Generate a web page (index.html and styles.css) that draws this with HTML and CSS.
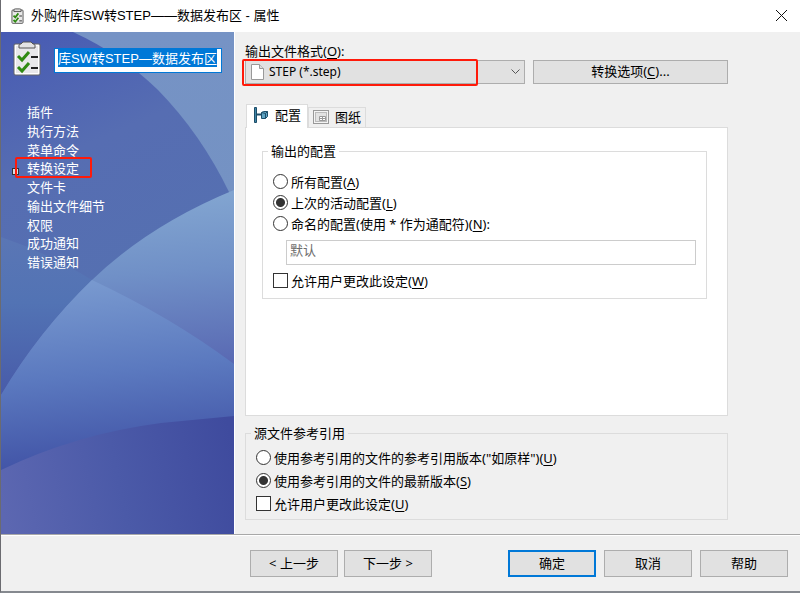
FILE: index.html
```html
<!DOCTYPE html>
<html lang="zh-CN">
<head>
  <meta charset="UTF-8">
  <title>外购件库SW转STEP——数据发布区 - 属性</title>
  <link rel="stylesheet" href="styles.css">
</head>
<body>

  <header class="titlebar">
    <svg class="title-icon" viewBox="0 0 28 36">
      <rect x="1.5" y="4.500" width="25" height="30" rx="2" fill="#e9e9e9" stroke="#4d4d4d" stroke-width="2"/>
      <path d="M6 8V4q0-2 3-2h10q3 0 3 2v4z" fill="#ddd" stroke="#4d4d4d" stroke-width="2"/>
      <path d="M5 17l4 4 7-9M5 27l4 4 7-9" fill="none" stroke="#2f8a12" stroke-width="4"/>
      <path d="M18 18h6M18 29h6" stroke="#222" stroke-width="2"/>
    </svg>
    <h1>外购件库SW转STEP——数据发布区 - 属性</h1>
    <button class="close" type="button" aria-label="关闭">
      <svg viewBox="0 0 11 11"><path d="M0 0l11 11M11 0L0 11" stroke="#111" fill="none"/></svg>
    </button>
  </header>

  <div class="main">
    <aside class="sidebar">
      <svg class="waves" viewBox="0 0 233 502" preserveAspectRatio="none">
        <defs>
          <linearGradient id="base" x1="0" y1="0" x2="0" y2="1">
            <stop offset="0" stop-color="#7693c5"/><stop offset="1" stop-color="#7090bf"/>
          </linearGradient>
          <linearGradient id="disc" x1="0" y1="0" x2=".4" y2="1">
            <stop offset="0" stop-color="#475ab3"/><stop offset=".5" stop-color="#566db2"/><stop offset="1" stop-color="#5570b1"/>
          </linearGradient>
          <linearGradient id="low" gradientUnits="userSpaceOnUse" x1="0" y1="205" x2="0" y2="370">
            <stop offset="0" stop-color="#5a76b5"/><stop offset=".4" stop-color="#5273b4"/><stop offset="1" stop-color="#4759a8"/>
          </linearGradient>
          <linearGradient id="hill" gradientUnits="userSpaceOnUse" x1="200" y1="158" x2="215" y2="332">
            <stop offset="0" stop-color="#83a6d1"/><stop offset=".45" stop-color="#7090c7"/><stop offset="1" stop-color="#5969b3"/>
          </linearGradient>
          <linearGradient id="hill2" gradientUnits="userSpaceOnUse" x1="80" y1="245" x2="100" y2="440">
            <stop offset="0" stop-color="#7a9bd0"/><stop offset=".5" stop-color="#5b79bf"/><stop offset="1" stop-color="#3f50a4"/>
          </linearGradient>
          <linearGradient id="floor" gradientUnits="userSpaceOnUse" x1="0" y1="470" x2="233" y2="420">
            <stop offset="0" stop-color="#5c67b1"/><stop offset=".5" stop-color="#4b5aa8"/><stop offset="1" stop-color="#3f4b9e"/>
          </linearGradient>
          <clipPath id="hillclip">
            <path d="M233 158Q148 193 91 248Q38 299 0 363V502H233z"/>
          </clipPath>
        </defs>
        <rect width="233" height="502" fill="url(#base)"/>
        <path d="M0 0H72Q120 22 157 58Q200 102 228 160L235 180V260H0z" fill="url(#disc)"/>
        <path d="M0 205Q45 220 91 248V400H0z" fill="url(#low)"/>
        <g clip-path="url(#hillclip)">
          <rect width="233" height="502" fill="url(#hill)"/>
          <path d="M0 205Q45 220 91 248Q170 285 233 332V502H0z" fill="url(#hill2)"/>
          <path d="M0 438Q75 402 160 391L233 384V502H0z" fill="url(#floor)"/>
        </g>
      </svg>

      <div class="task">
        <svg class="task-icon" viewBox="0 0 28 36">
          <rect x="2" y="5" width="24" height="29" rx="1" fill="#e8e8ea" stroke="#fff" stroke-width="2"/>
          <path d="M1 34V5q0-1 1-1h24q1 0 1 1v29q0 1-1 1H2q-1 0-1-1z" fill="none" stroke="#666"/>
          <path d="M6 8V5q0-1 2-1l2-2h8l2 2q2 0 2 1v3z" fill="#e4e4e4" stroke="#555"/>
          <path d="M5 16l4 4 7-8M5 27l4 4 7-8" fill="none" stroke="#2f8a12" stroke-width="3"/>
          <path d="M18 17h7M18 28h7" stroke="#222" stroke-width="2"/>
        </svg>
        <input id="taskName" class="task-name" type="text" value="库SW转STEP—数据发布区" aria-label="任务名称">
      </div>

      <nav class="steps">
        <a href="#">插件</a>
        <a href="#">执行方法</a>
        <a href="#">菜单命令</a>
        <a href="#" class="current">转换设定</a>
        <a href="#">文件卡</a>
        <a href="#">输出文件细节</a>
        <a href="#">权限</a>
        <a href="#">成功通知</a>
        <a href="#">错误通知</a>
      </nav>
    </aside>

    <main class="content">
      <label class="format-label" for="format">输出文件格式(<u>O</u>):</label>
      <div class="format-row">
        <div class="combo">
          <select id="format"><option>STEP (*.step)</option></select>
          <svg class="combo-file" viewBox="0 0 13 16"><path d="M.5.5h8l4 4v11H.5z" fill="#fff" stroke="#999"/><path d="M8.500.5v4h4" fill="#ddd" stroke="#999"/></svg>
          <svg class="combo-arrow" viewBox="0 0 9 6"><path d="M.5.5l4 4 4-4" fill="none" stroke="#555"/></svg>
          <span class="mark"></span>
        </div>
        <button class="btn options" type="button"><span>转换选项(<u>C</u>)...</span></button>
      </div>

      <div class="tabs" role="tablist">
        <button class="tab active" type="button" role="tab" aria-selected="true">
          <svg viewBox="0 0 16 16"><path d="M1.500.5h2v15h-2z" fill="#3f86a8" stroke="#1d4d68"/><path d="M4 7.500h4" stroke="#1d4d68" stroke-width="2"/><path d="M8.500 5.500l2-1h4v5l-2 2h-4z" fill="#5fa3c2" stroke="#1d4d68"/><path d="M8.500 5.500l4 1v5M12.500 6.500l2-2" fill="none" stroke="#1d4d68"/></svg>
          配置
        </button>
        <button class="tab" type="button" role="tab" aria-selected="false">
          <svg viewBox="0 0 16 16"><rect x=".5" y="1.500" width="15" height="13" fill="#f4f4f4" stroke="#999"/><rect x="2.500" y="3.500" width="11" height="9" fill="#e2e2e2" stroke="#bbb"/><path d="M6.500 7.500h6v4h-6zM6.500 9.500h6M9.500 7.500v4" fill="#fff" stroke="#999"/></svg>
          图纸
        </button>
      </div>

      <section class="panel" role="tabpanel">
        <fieldset class="group configs">
          <legend>输出的配置</legend>
          <label class="choice"><input type="radio" name="config">所有配置(<u>A</u>)</label>
          <label class="choice"><input type="radio" name="config" checked>上次的活动配置(<u>L</u>)</label>
          <label class="choice"><input type="radio" name="config">命名的配置(使用 * 作为通配符)(<u>N</u>):</label>
          <input class="named" type="text" value="默认" aria-label="命名的配置" disabled>
          <label class="choice"><input type="checkbox">允许用户更改此设定(<u>W</u>)</label>
        </fieldset>
      </section>

      <fieldset class="group refs">
        <legend>源文件参考引用</legend>
        <label class="choice"><input type="radio" name="refs">使用参考引用的文件的参考引用版本("如原样")(<u>U</u>)</label>
        <label class="choice"><input type="radio" name="refs" checked>使用参考引用的文件的最新版本(<u>S</u>)</label>
        <label class="choice"><input type="checkbox">允许用户更改此设定(<u>U</u>)</label>
      </fieldset>
    </main>
  </div>

  <footer class="footer">
    <div class="btn-group near">
      <button class="btn" type="button">&lt; 上一步</button>
      <button class="btn" type="button">下一步 &gt;</button>
    </div>
    <div class="btn-group">
      <button class="btn primary" type="button">确定</button>
      <button class="btn" type="button">取消</button>
      <button class="btn" type="button">帮助</button>
    </div>
  </footer>

  <script>
    const taskName = document.getElementById('taskName');
    taskName.focus();
    taskName.select();
  </script>

</body>
</html>
```

FILE: styles.css
```css
* { box-sizing: border-box; }
body {
  margin: 0; min-height: 100vh;
  display: flex; flex-direction: column;
  background: #f0f0f0; color: #000;
  border-left: 1px solid #6b6b70;
  border-bottom: 2px solid #85898f;
  font: 13px/18px "Noto Sans", "Noto Sans CJK SC", sans-serif;
}
button, input, select { font: inherit; color: inherit; margin: 0; }
u { text-underline-offset: 2px; }

/* title bar */
.titlebar {
  display: flex; align-items: center;
  height: 32px; padding-left: 10px; background: #fff;
}
.title-icon { width: 13px; height: 16px; }
.titlebar h1 {
  flex: 1; margin: 0 0 0 7px;
  font: 13px/18px "Liberation Sans", "Noto Sans CJK SC", sans-serif;
}
.close {
  width: 38px; height: 32px; padding: 0 0 2px;
  border: 0; background: none;
}
.close svg { display: block; width: 11px; height: 11px; margin: auto; }

.main { flex: 1; display: flex; }

/* sidebar */
.sidebar {
  position: relative; flex: none; width: 234px;
  border-right: 1px solid #fff; color: #fff;
}
.waves { position: absolute; top: 0; left: 0; width: 100%; height: 100%; }
.task {
  position: relative; display: flex; align-items: center; gap: 13px;
  padding: 8px 12px 0;
}
.task-icon { width: 28px; height: 36px; flex: none; }
.task-name {
  flex: 1; min-width: 0; height: 25px; margin-top: 4px;
  padding: 2px 3px 7px; border: 1px solid #0078d7;
  background: #fff; color: #000; outline: none;
  font: 13px/14px "Liberation Sans", "Noto Sans CJK SC", sans-serif;
}
.task-name::selection { background: #0078d7; color: #fff; }
.steps {
  position: relative;
  display: flex; flex-direction: column; align-items: flex-start;
  justify-content: space-between;
  height: 168px; margin: 27px 0 0 16px;
}
.steps a {
  position: relative; padding-left: 10px;
  color: #fff; text-decoration: none; line-height: 18px;
}
.steps .current::before {
  content: ""; position: absolute; left: -5px; top: 9px;
  width: 5px; height: 5px; border: 1px solid #333; background: #ddd;
}
.steps .current::after {
  content: ""; position: absolute; inset: -2px -13px -1px -2px;
  border: 2px solid #ff1a0a; border-radius: 2px;
}

/* content */
.content { flex: 1; padding: 10px 72px 12px 10px; }
.format-label { display: block; }
.format-row { display: flex; gap: 8px; height: 24px; }
.combo { position: relative; flex: 281; }
.combo select {
  appearance: none; width: 100%; height: 24px;
  padding: 0 24px 0 23px; border: 1px solid #adadad; border-radius: 0;
  background: #e1e1e1; font-size: 12px;
}
.combo-file { position: absolute; left: 6px; top: 4px; width: 13px; height: 16px; }
.combo-arrow { position: absolute; right: 5px; top: 9px; width: 9px; height: 6px; }
.mark {
  position: absolute; left: -3px; right: 47px; top: -1px; bottom: -2px;
  border: 2px solid #ff1a0a; border-radius: 2px;
}
.btn {
  width: 88px; height: 27px; padding: 0 0 2px;
  border: 1px solid #adadad; background: #e1e1e1;
}
.btn.options { flex: 194; height: 24px; }
.btn.primary { border: 2px solid #0078d7; }

.tabs { display: flex; align-items: flex-end; margin: 20px 0 -1px 1px; }
.tab {
  display: flex; align-items: center; gap: 6px;
  height: 21px; padding: 0 4px 2px;
  border: 1px solid #dcdcdc; background: #f0f0f0;
}
.tab svg { width: 16px; height: 16px; }
.tab.active {
  position: relative; height: 24px; padding: 0 6px 3px;
  border-bottom: 0; background: #fff;
}
.panel {
  min-height: 289px; padding: 14px 20px 20px 16px;
  border: 1px solid #dcdcdc; background: #fff;
}
.group { margin: 0; min-width: 0; border: 1px solid #dcdcdc; }
.group legend { padding: 0 3px; }
.configs { padding: 11px 10px 7px 5px; }
.refs { margin-top: 8px; padding: 4px 5px; }
.choice {
  display: flex; align-items: center;
  height: 21px; padding-left: 5px; white-space: pre;
}
.refs .choice { height: 23px; }
.choice input {
  appearance: none; flex: none;
  width: 15px; height: 15px; margin-right: 3px;
  border: 1px solid #333; background: #fff;
}
.choice input[type=radio] { border-radius: 50%; }
.choice input[type=radio]:checked {
  background: radial-gradient(circle, #333 4px, #fff 5px);
}
.named {
  display: block; width: calc(100% - 18px); height: 25px;
  margin: 6px 0 5px 18px; padding: 0 3px 6px;
  border: 1px solid #ccc; background: #fff; color: #6d6d6d;
}

/* bottom buttons */
.footer {
  display: flex; justify-content: space-between;
  padding: 15px 12px 14px 249px;
  border-top: 1px solid #a8a8a8; box-shadow: inset 0 1px #fff;
}
.btn-group { display: flex; gap: 8px; }
.btn-group.near { gap: 6px; }
```
